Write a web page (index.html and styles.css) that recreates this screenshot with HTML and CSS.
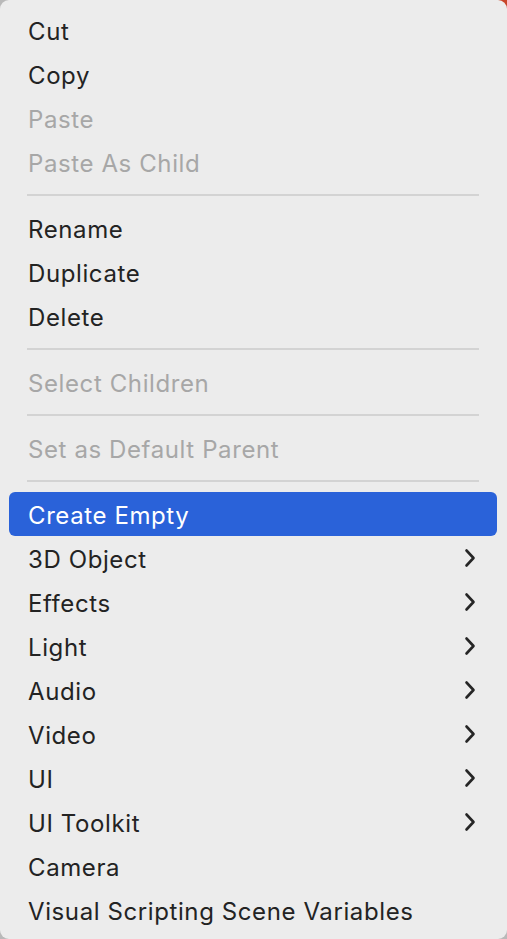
FILE: index.html
```html
<!DOCTYPE html>
<html>
<head>
<meta charset="utf-8">
<link rel="stylesheet" href="styles.css">
</head>
<body>
<div class="backdrop">
  <div class="menu">
    <div class="item">Cut</div>
    <div class="item">Copy</div>
    <div class="item disabled">Paste</div>
    <div class="item disabled">Paste As Child</div>
    <div class="sep"></div>
    <div class="item">Rename</div>
    <div class="item">Duplicate</div>
    <div class="item">Delete</div>
    <div class="sep"></div>
    <div class="item disabled">Select Children</div>
    <div class="sep"></div>
    <div class="item disabled">Set as Default Parent</div>
    <div class="sep"></div>
    <div class="item active">Create Empty</div>
    <div class="item"><span>3D Object</span><svg class="chev" viewBox="0 0 12 20"><polyline points="2.5,2.5 9.5,10 2.5,17.5"/></svg></div>
    <div class="item"><span>Effects</span><svg class="chev" viewBox="0 0 12 20"><polyline points="2.5,2.5 9.5,10 2.5,17.5"/></svg></div>
    <div class="item"><span>Light</span><svg class="chev" viewBox="0 0 12 20"><polyline points="2.5,2.5 9.5,10 2.5,17.5"/></svg></div>
    <div class="item"><span>Audio</span><svg class="chev" viewBox="0 0 12 20"><polyline points="2.5,2.5 9.5,10 2.5,17.5"/></svg></div>
    <div class="item"><span>Video</span><svg class="chev" viewBox="0 0 12 20"><polyline points="2.5,2.5 9.5,10 2.5,17.5"/></svg></div>
    <div class="item"><span>UI</span><svg class="chev" viewBox="0 0 12 20"><polyline points="2.5,2.5 9.5,10 2.5,17.5"/></svg></div>
    <div class="item"><span>UI Toolkit</span><svg class="chev" viewBox="0 0 12 20"><polyline points="2.5,2.5 9.5,10 2.5,17.5"/></svg></div>
    <div class="item">Camera</div>
    <div class="item">Visual Scripting Scene Variables</div>
  </div>
</div>
</body>
</html>
```
FILE: styles.css
```css
html, body {
  margin: 0;
  padding: 0;
}
body {
  background: #b9b9b9;
  width: 507px;
  height: 939px;
  overflow: hidden;
}
.backdrop {
  background: linear-gradient(225deg, #c8452a 0, #c8452a 10px, #b9b9b9 10px);
  width: 507px;
  height: 939px;
}
.menu {
  box-sizing: border-box;
  width: 507px;
  height: 939px;
  background: #ececec;
  border-radius: 9px;
  padding: 8px 10px 7px 9px;
  font-family: Inter, "Liberation Sans", sans-serif;
  font-size: 24px;
  letter-spacing: 0.6px;
  color: #232323;
}
.item {
  box-sizing: border-box;
  height: 44px;
  display: flex;
  align-items: center;
  justify-content: space-between;
  padding: 2px 21px 0 19px;
  border-radius: 6px;
  white-space: nowrap;
}
.item.disabled {
  color: #a7a7a7;
}
.item.active {
  background: #2a62d9;
  color: #ffffff;
}
.sep {
  height: 22px;
  display: flex;
  align-items: center;
  padding: 0 18px;
}
.sep::before {
  content: "";
  display: block;
  flex: 1;
  height: 2px;
  background: #d3d3d3;
}
.chev {
  width: 12px;
  height: 20px;
  margin-top: -2px;
  fill: none;
  stroke: #262626;
  stroke-width: 2.6;
  stroke-linecap: round;
  stroke-linejoin: round;
}
```
